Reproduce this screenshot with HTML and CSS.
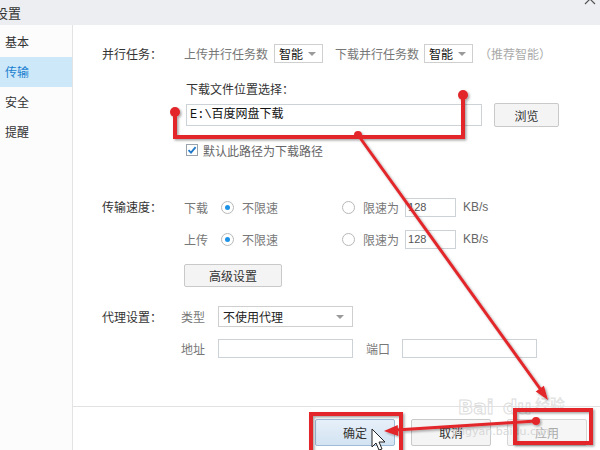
FILE: index.html
```html
<!DOCTYPE html>
<html lang="zh-CN">
<head>
  <meta charset="UTF-8" />
  <title>设置 - 传输</title>
  <link rel="stylesheet" href="styles.css">
</head>
<body>
  <div class="window">
    <div class="titlebar">
      <span class="title">设置</span>
      <svg class="close" width="14" height="8" viewBox="0 0 14 8"><path d="M2 6 L7 1 L12 6" fill="none" stroke="#555" stroke-width="1.2"/></svg>
    </div>

    <div class="body">
      <ul class="sidebar">
        <li>基本</li>
        <li class="active">传输</li>
        <li>安全</li>
        <li>提醒</li>
      </ul>

      <div class="main">
        <div class="content">

          <section class="group g-parallel">
            <div class="group-label">并行任务：</div>
            <div class="group-body">
              <div class="line row-top">
                <span class="muted">上传并行任务数</span>
                <span class="select small up">智能<i class="caret"></i></span>
                <span class="muted down-label">下载并行任务数</span>
                <span class="select small down">智能<i class="caret"></i></span>
                <span class="hint">（推荐智能）</span>
              </div>
              <div class="sub-title">下载文件位置选择：</div>
              <div class="line path-line">
                <span class="input path">E:\百度网盘下载</span>
                <span class="btn browse">浏览</span>
              </div>
              <div class="line check">
                <span class="box">
                  <svg width="10" height="10" viewBox="0 0 10 10"><path d="M1.5 5.2 L4 7.6 L8.6 2.2" fill="none" stroke="#1f78c8" stroke-width="1.8"/></svg>
                </span>
                <span>默认此路径为下载路径</span>
              </div>
            </div>
          </section>

          <section class="group g-speed">
            <div class="group-label">传输速度：</div>
            <div class="group-body">
              <div class="line speed-line">
                <span class="muted dir">下载</span>
                <span class="opt"><i class="radio on"></i><span class="muted">不限速</span></span>
                <span class="opt"><i class="radio"></i><span class="muted">限速为</span></span>
                <span class="input num">128</span>
                <span class="unit">KB/s</span>
              </div>
              <div class="line speed-line second">
                <span class="muted dir">上传</span>
                <span class="opt"><i class="radio on"></i><span class="muted">不限速</span></span>
                <span class="opt"><i class="radio"></i><span class="muted">限速为</span></span>
                <span class="input num">128</span>
                <span class="unit">KB/s</span>
              </div>
              <span class="btn advanced">高级设置</span>
            </div>
          </section>

          <section class="group g-proxy">
            <div class="group-label">代理设置：</div>
            <div class="group-body">
              <div class="line proxy-line">
                <span class="muted dir">类型</span>
                <span class="select wide">不使用代理<i class="caret"></i></span>
              </div>
              <div class="line proxy-line second">
                <span class="muted dir">地址</span>
                <span class="input wide"></span>
                <span class="muted port">端口</span>
                <span class="input wide"></span>
              </div>
            </div>
          </section>

        </div>

        <div class="footer">
          <span class="btn action primary">确定</span>
          <span class="btn action">取消</span>
          <span class="btn action disabled">应用</span>
        </div>
      </div>
    </div>

    <svg class="marks" width="600" height="450" viewBox="0 0 600 450">
      <defs>
        <filter id="sh" x="-10%" y="-10%" width="120%" height="120%">
          <feDropShadow dx="1.5" dy="1.5" stdDeviation="1" flood-color="#000" flood-opacity="0.35"/>
        </filter>
      </defs>
      <g class="watermark">
        <text x="458" y="414" class="wm-big">Bai</text>
        <text x="503" y="414" class="wm-big">du</text>
        <text x="535" y="410" class="wm-cn">经验</text>
        <text x="452" y="435" class="wm-small">jingyan.baidu.com</text>
      </g>
      <g filter="url(#sh)">
        <g fill="none" stroke="#e2262b" stroke-width="4">
          <path d="M175 112 V137 H463 V95"/>
          <rect x="515" y="410" width="76" height="33"/>
          <rect x="311" y="414" width="90" height="40"/>
        </g>
        <g fill="none" stroke="#e2262b" stroke-width="3">
          <line x1="358" y1="135" x2="541" y2="390"/>
          <line x1="536" y1="421" x2="396" y2="430"/>
        </g>
        <g fill="#e2262b">
          <circle cx="175" cy="112" r="5"/>
          <circle cx="463" cy="95" r="5"/>
          <circle cx="358" cy="135" r="4"/>
          <circle cx="536" cy="421" r="4"/>
          <polygon points="548,400 535.7,391.5 543.9,385.7"/>
          <polygon points="384,431 398.3,436.1 397.7,425.1"/>
        </g>
      </g>
      <path class="cursor" d="M372 429 L372 447 L376 443 L379 450 L382 449 L379 442 L385 442 Z"/>
    </svg>
  </div>
</body>
</html>
```

FILE: styles.css
```css
* { box-sizing: border-box; }

body {
  margin: 0;
  width: 600px;
  height: 450px;
  overflow: hidden;
  font-family: "Noto Sans CJK SC", "Liberation Sans", sans-serif;
  font-size: 12px;
  color: #333;
  background: #fff;
}

.window {
  position: relative;
  width: 600px;
  height: 450px;
  display: flex;
  flex-direction: column;
}

/* title bar */
.titlebar {
  height: 25px;
  flex-shrink: 0;
  background: #eceef1;
  display: flex;
  align-items: center;
  justify-content: space-between;
}

.title {
  margin-left: -5px;
  font-size: 13px;
  color: #333;
}

.close {
  align-self: flex-start;
  margin-right: 3px;
  margin-top: -2px;
}

.body {
  flex: 1;
  display: flex;
}

/* left menu */
.sidebar {
  list-style: none;
  margin: 0;
  padding: 2px 0 0;
  width: 73px;
  flex-shrink: 0;
  background: #fcfcfc;
  border-right: 1px solid #e3e3e3;
}

.sidebar li {
  height: 30px;
  line-height: 30px;
  padding-left: 5px;
  color: #333;
}

.sidebar li.active {
  background: #cde8f9;
  color: #1b7fd0;
}

/* main panel */
.main {
  flex: 1;
  display: flex;
  flex-direction: column;
}

.content {
  flex: 1;
  padding: 19px 0 0 29px;
}

.group {
  display: flex;
}

.group-label {
  width: 82px;
  flex-shrink: 0;
  height: 20px;
  line-height: 20px;
  color: #333;
}

.g-speed { margin-top: 39px; }
.g-proxy { margin-top: 19px; }
.g-proxy .group-body { margin-left: -3px; }
.g-proxy .group-label { height: 21px; line-height: 21px; }

.line {
  display: flex;
  align-items: center;
}

.muted { color: #777; }

.row-top { height: 19px; }

.select {
  position: relative;
  height: 19px;
  border: 1px solid #cfcfcf;
  background: #fff;
  color: #111;
  padding-left: 4px;
  line-height: 17px;
}

.select.small { width: 49px; }
.select.up { margin-left: 6px; }
.down-label { margin-left: 12px; }
.select.down { margin-left: 5px; }

.caret {
  position: absolute;
  right: 6px;
  top: 7px;
  border-left: 4px solid transparent;
  border-right: 4px solid transparent;
  border-top: 4px solid #9a9a9a;
}

.hint {
  margin-left: 6px;
  color: #aaa;
}

.sub-title {
  margin-top: 16px;
  height: 20px;
  line-height: 20px;
  margin-left: 2px;
  color: #333;
}

.path-line {
  margin-top: 4px;
  height: 24px;
  margin-left: 2px;
}

.input {
  border: 1px solid #cdd2d6;
  background: #fff;
}

.input.path {
  width: 296px;
  height: 22px;
  line-height: 20px;
  padding-left: 3px;
  color: #111;
  font-family: "Liberation Mono", "Noto Sans CJK SC", monospace;
  font-size: 12px;
}

.btn {
  display: flex;
  align-items: center;
  justify-content: center;
  background: #f4f4f4;
  border: 1px solid #c9c9c9;
  border-radius: 2px;
  color: #333;
}

.browse {
  margin-left: 12px;
  width: 65px;
  height: 24px;
}

.check {
  margin-top: 15px;
  height: 16px;
  margin-left: 2px;
  color: #666;
}

.box {
  width: 12px;
  height: 12px;
  border: 1px solid #9aa3ab;
  background: #fff;
  margin-right: 5px;
  display: flex;
  align-items: center;
  justify-content: center;
}

/* speed */
.speed-line { height: 20px; }
.speed-line.second { margin-top: 12px; }

.dir { width: 37px; flex-shrink: 0; }

.opt {
  display: flex;
  align-items: center;
  width: 121px;
}

.opt + .opt { width: auto; }

.radio {
  width: 13px;
  height: 13px;
  border: 1px solid #b8b8b8;
  border-radius: 50%;
  background: #fff;
  margin-right: 8px;
  display: flex;
  align-items: center;
  justify-content: center;
}

.radio.on::after {
  content: "";
  width: 5px;
  height: 5px;
  border-radius: 50%;
  background: #1e93e6;
}

.input.num {
  margin-left: 6px;
  width: 51px;
  height: 19px;
  line-height: 17px;
  padding-left: 2px;
  font-family: "Liberation Sans", sans-serif;
  font-size: 11px;
  color: #555;
}

.unit {
  margin-left: 7px;
  font-family: "Liberation Sans", sans-serif;
  color: #666;
}

.advanced {
  margin-top: 15px;
  width: 98px;
  height: 23px;
}

/* proxy */
.proxy-line { height: 21px; }
.proxy-line.second { margin-top: 11px; height: 20px; }

.select.wide {
  width: 135px;
  height: 21px;
  line-height: 19px;
  color: #222;
}

.select.wide .caret { right: 8px; top: 8px; }

.input.wide {
  width: 135px;
  height: 19px;
}

.port {
  margin-left: 13px;
  width: 36px;
}

/* footer */
.footer {
  height: 44px;
  flex-shrink: 0;
  border-top: 1px solid #e2e2e2;
  display: flex;
  justify-content: flex-end;
  gap: 16px;
  padding: 12px 13px 0 0;
}

.action {
  width: 80px;
  height: 27px;
}

.action.primary {
  background: linear-gradient(#e6f0f9, #d3e3f2);
  border-color: #9dbad6;
}

.action.disabled {
  color: #aaa;
  background: #f6f6f6;
  border-color: #d6d6d6;
}

/* annotations on top of the screenshot */
.marks {
  position: absolute;
  left: 0;
  top: 0;
  pointer-events: none;
}

.wm-big {
  font-family: "DejaVu Sans", sans-serif;
  font-weight: bold;
  font-size: 20px;
  fill: none;
  stroke: #dcdcdc;
  stroke-width: 1;
}

.wm-cn {
  font-family: "Noto Sans CJK SC", sans-serif;
  font-size: 15px;
  font-weight: bold;
  fill: #e4e4e4;
}

.wm-small {
  font-family: "DejaVu Sans", sans-serif;
  font-size: 11px;
  fill: #d8d8d8;
}

.cursor {
  fill: #fff;
  stroke: #222;
  stroke-width: 1;
}
```
